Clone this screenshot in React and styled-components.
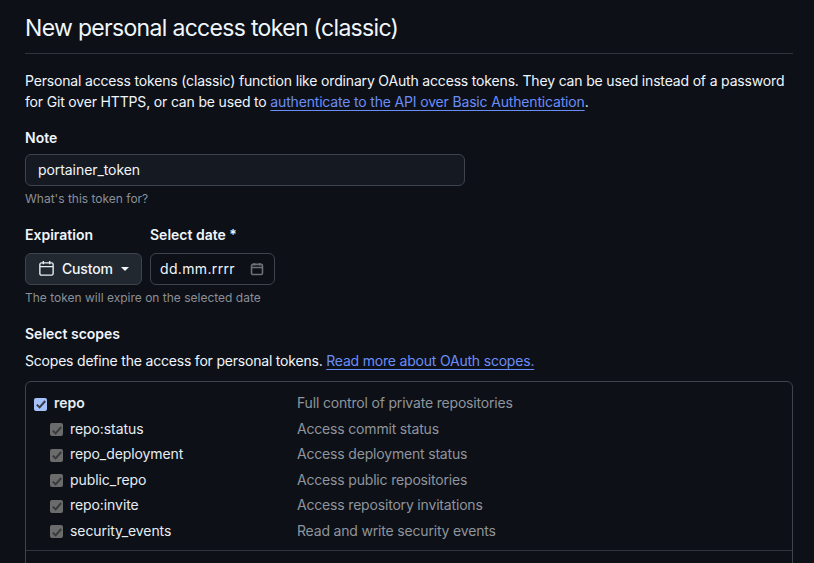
import React from "react";
import styled, { createGlobalStyle } from "styled-components";

const Global = createGlobalStyle`
  html, body { margin: 0; padding: 0; background: #0d1017; height: 563px; overflow: hidden; }
  body { font-family: Inter, "Liberation Sans", sans-serif; color: #f0f6fc; font-size: 14px; }
`;

const Page = styled.main`
  width: 768px;
  margin-left: 25px;
  height: 563px;
  overflow: hidden;
`;
const Header = styled.header`
  height: 53px;
  border-bottom: 1px solid #30363d;
  box-sizing: content-box;
`;
const Title = styled.h1`
  margin: 0;
  padding-top: 12px;
  font-size: 23px;
  line-height: 32px;
  font-weight: 400;
  letter-spacing: -0.68px;
  color: #f0f6fc;
`;
const Intro = styled.p`
  margin: 16px 0 0;
  line-height: 21px;
  font-size: 14px;
  letter-spacing: -0.17px;
  white-space: nowrap;
`;
const Link = styled.a`
  color: #6b8df7;
  text-decoration: underline;
  text-underline-offset: 3px;
  text-decoration-thickness: 1px;
`;
const Label = styled.label`
  display: block;
  font-weight: 600;
  font-size: 14px;
  line-height: 20px;
`;
const NoteField = styled.div`
  margin-top: 16px;
`;
const TextInput = styled.div`
  box-sizing: border-box;
  width: 440px;
  height: 32px;
  margin-top: 6px;
  padding: 0 12px 1px;
  display: flex;
  align-items: center;
  background: #151a22;
  border: 1px solid #3d444d;
  border-radius: 6px;
  letter-spacing: -0.07px;
`;
const Hint = styled.div`
  margin-top: 4px;
  font-size: 12px;
  line-height: 18px;
  color: #8b8f96;
`;
const ExpiryRow = styled.div`
  display: flex;
  gap: 8px;
  margin-top: 17px;
`;
const ExpiryField = styled.div`
  display: flex;
  flex-direction: column;
  gap: 8px;
`;
const SelectButton = styled.div`
  box-sizing: border-box;
  width: 117px;
  height: 32px;
  display: flex;
  align-items: center;
  padding: 0 0 1px 12px;
  gap: 7px;
  background: #212830;
  border: 1px solid #3d444d;
  border-radius: 6px;
  font-weight: 500;
  letter-spacing: -0.17px;
`;
const Caret = styled.span`
  width: 0;
  height: 0;
  margin-left: 1px;
  border-left: 4px solid transparent;
  border-right: 4px solid transparent;
  border-top: 4px solid #f0f6fc;
`;
const DateInput = styled.div`
  box-sizing: border-box;
  width: 125px;
  height: 32px;
  display: flex;
  align-items: center;
  justify-content: space-between;
  padding: 0 10px 1px 9px;
  background: #0d1117;
  border: 1px solid #3d444d;
  border-radius: 6px;
  letter-spacing: 0.35px;
`;
const ScopesTitle = styled(Label)`
  margin-top: 17px;
`;
const ScopesText = styled.p`
  margin: 7px 0 0;
  line-height: 20px;
  letter-spacing: -0.2px;
`;
const ScopesBox = styled.section`
  box-sizing: border-box;
  margin-top: 10px;
  border: 1px solid #3d444d;
  border-radius: 6px;
  padding: 8px 0 0 8px;
  height: 300px;
`;
const Row = styled.div`
  box-sizing: border-box;
  display: grid;
  grid-template-columns: ${(p) => (p.$sub ? "247px" : "263px")} 1fr;
  align-items: center;
  height: ${(p) => (p.$sub ? "25.5px" : "25.7px")};
  padding-left: ${(p) => (p.$sub ? "16px" : "0")};
`;
const ScopeName = styled.span`
  display: flex;
  align-items: center;
  gap: 7px;
  font-weight: ${(p) => (p.$strong ? 600 : 400)};
  letter-spacing: ${(p) => (p.$strong ? "0" : "-0.08px")};
  color: #e6edf3;
`;
const Check = styled.span`
  width: 13px;
  height: 13px;
  margin-top: 3px;
  border-radius: 2px;
  display: flex;
  align-items: center;
  justify-content: center;
  background: ${(p) => (p.$on ? "#a5c1fb" : "#6b6b6b")};
`;
const ScopeDesc = styled.span`
  color: #8f959c;
  letter-spacing: -0.18px;
`;
const Divider = styled.div`
  height: 1px;
  background: #30363d;
  margin: 7px 0 0 -8px;
`;

const CheckMark = () => (
  <svg width="12" height="12" viewBox="0 0 12 12" fill="none">
    <path d="M1.8 6.6 4.6 9.4 10.2 3" stroke="#37393f" strokeWidth="2" />
  </svg>
);

const Calendar = ({ size, color, width }) => (
  <svg width={size} height={size} viewBox="0 0 16 16" fill="none" stroke={color} strokeWidth={width}>
    <rect x="1.75" y="2.75" width="12.5" height="11.5" rx="1.5" />
    <path d="M1.75 6.25h12.5M5 1v3M11 1v3" />
  </svg>
);

const subs = [
  ["repo:status", "Access commit status"],
  ["repo_deployment", "Access deployment status"],
  ["public_repo", "Access public repositories"],
  ["repo:invite", "Access repository invitations"],
  ["security_events", "Read and write security events"],
];

export default function App() {
  return (
    <Page>
      <Global />
      <Header>
        <Title>New personal access token (classic)</Title>
      </Header>
      <Intro>
        Personal access tokens (classic) function like ordinary OAuth access tokens. They can be used instead of a password
        <br />
        for Git over HTTPS, or can be used to <Link>authenticate to the API over Basic Authentication</Link>.
      </Intro>
      <NoteField>
        <Label>Note</Label>
        <TextInput>portainer_token</TextInput>
        <Hint>What's this token for?</Hint>
      </NoteField>
      <ExpiryRow>
        <ExpiryField>
          <Label>Expiration</Label>
          <SelectButton>
            <Calendar size={17} color="#e6edf3" width={1.3} />
            Custom
            <Caret />
          </SelectButton>
        </ExpiryField>
        <ExpiryField>
          <Label>Select date *</Label>
          <DateInput>
            dd.mm.rrrr
            <Calendar size={14} color="#6e7276" width={1.8} />
          </DateInput>
        </ExpiryField>
      </ExpiryRow>
      <Hint>The token will expire on the selected date</Hint>
      <ScopesTitle>Select scopes</ScopesTitle>
      <ScopesText>
        Scopes define the access for personal tokens. <Link>Read more about OAuth scopes.</Link>
      </ScopesText>
      <ScopesBox>
        <Row>
          <ScopeName $strong>
            <Check $on><CheckMark /></Check>
            repo
          </ScopeName>
          <ScopeDesc>Full control of private repositories</ScopeDesc>
        </Row>
        {subs.map(([name, desc]) => (
          <Row $sub key={name}>
            <ScopeName>
              <Check><CheckMark /></Check>
              {name}
            </ScopeName>
            <ScopeDesc>{desc}</ScopeDesc>
          </Row>
        ))}
        <Divider />
      </ScopesBox>
    </Page>
  );
}
